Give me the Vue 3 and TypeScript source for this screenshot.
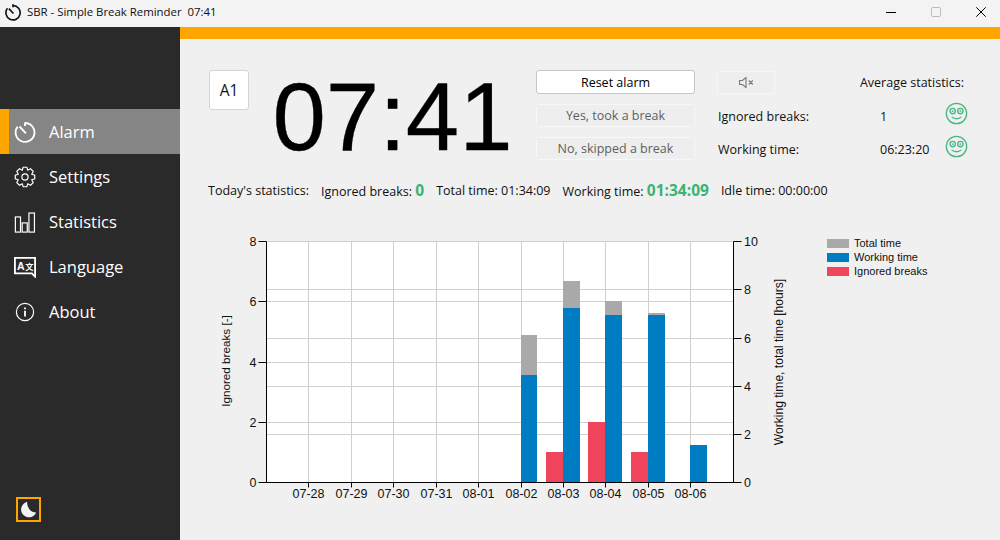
<template>
  <div class="window">
    <header class="titlebar">
      <svg class="app-icon" viewBox="0 0 24 24">
        <path d="M12 3.5a9.5 9.5 0 1 1-7.4 3.6" />
        <path d="M12 1.8v4M12.6 14 6.5 7.5" />
      </svg>
      <span class="app-title">SBR - Simple Break Reminder&nbsp; 07:41</span>
      <div class="win-controls">
        <svg viewBox="0 0 10 10"><path d="M0 5.5h10" stroke="#000" /></svg>
        <svg viewBox="0 0 10 10"><rect x=".5" y=".5" width="9" height="9" rx="1" stroke="#bbb" fill="none" /></svg>
        <svg viewBox="0 0 10 10"><path d="M.3.3l9.4 9.4M9.7.3.3 9.7" stroke="#000" /></svg>
      </div>
    </header>

    <div class="body">
      <aside class="sidebar">
        <nav class="nav">
          <div v-for="item in navItems" :key="item.label" class="nav-item" :class="{ active: item.active }">
            <svg class="nav-icon" viewBox="0 0 24 24">
              <template v-if="item.icon === 'alarm'">
                <path class="thick" d="M12 2.2a10.3 10.3 0 1 1-8 3.9" />
                <path class="thick" d="M12 1.5v4M13 13.5 6 6" />
              </template>
              <path v-else-if="item.icon === 'settings'" :d="gearPath" />
              <circle v-if="item.icon === 'settings'" cx="12" cy="12" r="3.4" />
              <template v-if="item.icon === 'stats'">
                <rect x="1.5" y="6.5" width="5.6" height="16.5" />
                <rect x="8.9" y="13" width="5.6" height="10" />
                <rect x="16.3" y="2.2" width="6" height="20.8" />
              </template>
              <template v-if="item.icon === 'lang'">
                <path class="thick" d="M1 2h22v20.5L19.5 19H1z" />
                <text x="3.2" y="15.5" class="icon-txt">A</text>
                <text x="12.2" y="15" class="icon-txt small">文</text>
              </template>
              <template v-if="item.icon === 'info'">
                <circle cx="12" cy="12" r="9.4" />
                <path class="thick" d="M12 10.5v6.5M12 7v2" />
              </template>
            </svg>
            <span>{{ item.label }}</span>
          </div>
        </nav>
        <button class="theme-btn">
          <svg viewBox="0 0 20 20" width="17" height="17">
            <path class="moon" d="M8.5 1A9.2 9.2 0 1 0 19 13.5 11 11 0 0 1 8.5 1z" />
          </svg>
        </button>
      </aside>

      <main class="main">
        <div class="accent"></div>
        <section class="top">
          <div class="alarm-id">A1</div>
          <div class="clock">07:41</div>
          <div class="actions">
            <button class="btn">Reset alarm</button>
            <button class="btn disabled">Yes, took a break</button>
            <button class="btn disabled">No, skipped a break</button>
          </div>
          <div class="avg">
            <div class="avg-head">
              <button class="btn disabled mute">
                <svg viewBox="0 0 15 11" width="15" height="11">
                  <path d="M.6 3.5h2.8L7 .6v9.8L3.4 7.5H.6zM9.8 3.5l4 4M13.8 3.5l-4 4" />
                </svg>
              </button>
              <span class="avg-title">Average statistics:</span>
            </div>
            <div v-for="row in avgRows" :key="row.label" class="avg-row">
              <span class="avg-label">{{ row.label }}</span>
              <span class="avg-value">{{ row.value }}</span>
              <svg class="smiley" viewBox="0 0 24 24">
                <circle cx="12" cy="12" r="10.6" />
                <circle cx="8" cy="9.5" r="2.8" />
                <circle cx="16" cy="9.5" r="2.8" />
                <circle class="pupil" cx="8" cy="9.5" r="1" />
                <circle class="pupil" cx="16" cy="9.5" r="1" />
                <path d="M7 15.5c2.5 2.6 7.5 2.6 10 0" />
              </svg>
            </div>
          </div>
        </section>

        <section class="today">
          <span>Today's statistics:</span>
          <span>Ignored breaks: <b>0</b></span>
          <span>Total time: 01:34:09</span>
          <span>Working time: <b>01:34:09</b></span>
          <span>Idle time: 00:00:00</span>
        </section>

        <section class="chart-row">
          <svg class="chart" viewBox="208 228 600 290" width="600" height="290">
            <rect :x="plot.left" :y="plot.top" :width="plot.right - plot.left" :height="plot.bottom - plot.top" fill="#fff" />
            <path v-for="x in gridX" :key="'gx' + x" class="grid" :d="`M${x} ${plot.top}V${plot.bottom}`" />
            <path v-for="y in gridY" :key="'gy' + y" class="grid" :d="`M${plot.left} ${y}H${plot.right}`" />

            <rect
              v-for="(bar, i) in bars"
              :key="i"
              :x="bar.x"
              :y="bar.top"
              :width="bar.w"
              :height="plot.bottom - bar.top"
              :fill="bar.color"
            />

            <path class="axis" :d="`M${plot.left} ${plot.top}V${plot.bottom}H${plot.right}V${plot.top}`" />

            <g v-for="t in leftTicks" :key="'l' + t.label">
              <path class="axis" :d="`M${plot.left - 8} ${t.y}H${plot.left}`" />
              <text class="tick" text-anchor="end" :x="plot.left - 10" :y="t.y + 4.5">{{ t.label }}</text>
            </g>
            <g v-for="t in rightTicks" :key="'r' + t.label">
              <path class="axis" :d="`M${plot.right} ${t.y}h8`" />
              <text class="tick" :x="plot.right + 10.5" :y="t.y + 4.5">{{ t.label }}</text>
            </g>
            <g v-for="(d, i) in days" :key="d">
              <path class="axis" :d="`M${gridX[i]} ${plot.bottom}v5`" />
              <text class="tick" text-anchor="middle" :x="gridX[i]" y="498">{{ d }}</text>
            </g>

            <text class="axis-title" text-anchor="middle" transform="translate(230 361) rotate(-90)">Ignored breaks [-]</text>
            <text class="axis-title wide" text-anchor="middle" transform="translate(783 362) rotate(-90)">Working time, total time [hours]</text>
          </svg>

          <ul class="legend">
            <li v-for="l in legend" :key="l.label">
              <i :style="{ background: l.color }"></i>{{ l.label }}
            </li>
          </ul>
        </section>
      </main>
    </div>
  </div>
</template>

<script setup lang="ts">
const navItems = [
  { label: "Alarm", icon: "alarm", active: true },
  { label: "Settings", icon: "settings" },
  { label: "Statistics", icon: "stats" },
  { label: "Language", icon: "lang" },
  { label: "About", icon: "info" },
];

const avgRows = [
  { label: "Ignored breaks:", value: "1" },
  { label: "Working time:", value: "06:23:20" },
];

const legend = [
  { label: "Total time", color: "#a9a9a9" },
  { label: "Working time", color: "#007cc3" },
  { label: "Ignored breaks", color: "#f0445c" },
];

// 8歯の歯車
function makeGear(teeth: number, outer: number, inner: number): string {
  const pts: string[] = [];
  const step = (Math.PI * 2) / teeth;
  for (let i = 0; i < teeth; i++) {
    const a = i * step - Math.PI / 2;
    const offs: [number, number][] = [
      [-0.5, inner],
      [-0.24, outer],
      [0.24, outer],
      [0.5, inner],
    ];
    for (const [o, r] of offs) {
      const ang = a + o * step;
      pts.push(`${(12 + r * Math.cos(ang)).toFixed(2)} ${(12 + r * Math.sin(ang)).toFixed(2)}`);
    }
  }
  return "M" + pts.join("L") + "Z";
}
const gearPath = makeGear(8, 10.8, 8);

const plot = { left: 266.5, right: 733.5, top: 241.5, bottom: 482.5 };
const gridX = [308.5, 351.5, 393.5, 436.5, 478.5, 521.5, 563.5, 605.5, 648.5, 690.5];
const gridY = [241.5, 289.5, 301.5, 338.5, 362.5, 386.5, 422.5, 434.5];
const days = ["07-28", "07-29", "07-30", "07-31", "08-01", "08-02", "08-03", "08-04", "08-05", "08-06"];

const leftTicks = [8, 6, 4, 2, 0].map((v) => ({ label: v, y: [482.5, 422.5, 362.5, 301.5, 241.5][v / 2] }));
const rightTicks = [10, 8, 6, 4, 2, 0].map((v) => ({ label: v, y: [482.5, 434.5, 386.5, 338.5, 289.5, 241.5][v / 2] }));

const gray = "#a9a9a9";
const blue = "#007cc3";
const red = "#f0445c";
const bars = [
  { x: 521, w: 16, top: 335, color: gray },
  { x: 521, w: 16, top: 375, color: blue },
  { x: 563, w: 17, top: 281, color: gray },
  { x: 563, w: 17, top: 308, color: blue },
  { x: 546, w: 17, top: 452, color: red },
  { x: 605, w: 17, top: 301, color: gray },
  { x: 605, w: 17, top: 315, color: blue },
  { x: 588, w: 17, top: 422, color: red },
  { x: 648, w: 17, top: 313, color: gray },
  { x: 648, w: 17, top: 315, color: blue },
  { x: 631, w: 17, top: 452, color: red },
  { x: 690, w: 17, top: 445, color: blue },
];
</script>

<style>
html,
body {
  margin: 0;
  background: #f0f0f0;
}
</style>

<style scoped>
.window {
  width: 1000px;
  height: 540px;
  display: flex;
  flex-direction: column;
  overflow: hidden;
  font-family: "Open Sans", "Noto Sans", sans-serif;
  font-size: 12.5px;
  color: #111;
  background: #f0f0f0;
}

.titlebar {
  height: 27px;
  flex: none;
  display: flex;
  align-items: center;
  padding: 0 14px 3px 4px;
  box-sizing: border-box;
  background: #f3f3f3;
}
.app-icon {
  width: 18px;
  height: 18px;
  margin-right: 5px;
  fill: none;
  stroke: #111;
  stroke-width: 2.2;
}
.app-title {
  font-size: 11.4px;
  margin-top: -1px;
}
.win-controls {
  margin-left: auto;
  display: flex;
  gap: 35px;
}
.win-controls svg {
  width: 10px;
  height: 10px;
  overflow: visible;
}

.body {
  flex: 1;
  display: flex;
  min-height: 0;
}

.sidebar {
  width: 180px;
  flex: none;
  display: flex;
  flex-direction: column;
  background: #2b2a2b;
  color: #fff;
  padding: 82px 0 18px;
  box-sizing: border-box;
}
.nav-item {
  height: 45px;
  display: flex;
  align-items: center;
  gap: 13px;
  padding-left: 14px;
  font-size: 16.5px;
  box-sizing: border-box;
}
.nav-item.active {
  background: #858585;
  border-left: 9px solid #ffa500;
  padding-left: 5px;
}
.nav-icon {
  width: 22px;
  height: 22px;
  fill: none;
  stroke: #fff;
  stroke-width: 1.3;
  flex: none;
}
.nav-icon .thick {
  stroke-width: 2;
}
.icon-txt {
  font-family: "Liberation Sans", sans-serif;
  font-size: 11.5px;
  font-weight: 700;
  fill: #fff;
  stroke: none;
}
.icon-txt.small {
  font-family: "Noto Sans CJK SC", sans-serif;
  font-size: 9px;
}
.theme-btn {
  margin: auto 0 0 16px;
  width: 25px;
  height: 25px;
  padding: 0;
  border: 2.5px solid #ffa500;
  background: none;
  display: flex;
  align-items: center;
  justify-content: center;
  box-sizing: border-box;
}
.moon {
  fill: #f4f4f4;
}

.main {
  flex: 1;
  display: flex;
  flex-direction: column;
  min-width: 0;
}
.accent {
  height: 12px;
  background: #ffa500;
  flex: none;
}

.top {
  display: flex;
  align-items: flex-start;
  padding: 31px 0 0 29px;
  height: 139px;
  box-sizing: border-box;
  flex: none;
}
.alarm-id {
  width: 40px;
  height: 40px;
  display: flex;
  align-items: center;
  justify-content: center;
  background: #fff;
  border: 1px solid #d4d4d4;
  border-radius: 3px;
  box-sizing: border-box;
  font-size: 15.5px;
}
.clock {
  width: 287px;
  margin-top: 3px;
  text-align: center;
  font-family: "Liberation Sans", Arial, sans-serif;
  font-size: 96px;
  line-height: 88px;
  color: #000;
  -webkit-text-stroke: 0.3px #000;
}
.actions {
  width: 159px;
  display: flex;
  flex-direction: column;
  gap: 10px;
}
.btn {
  height: 24px;
  padding: 0;
  font: inherit;
  color: #000;
  background: #fff;
  border: 1px solid #c6c6c6;
  border-radius: 3px;
  box-sizing: border-box;
}
.btn.disabled {
  height: 23px;
  background: #eeeeee;
  border-color: #f7f7f7;
  color: #5f5f5f;
}
.avg {
  margin-left: 23px;
  width: 250px;
  display: flex;
  flex-direction: column;
}
.avg-head {
  display: flex;
  align-items: center;
  justify-content: space-between;
  height: 22px;
  padding: 1px 4px 0 0;
  margin-bottom: 7px;
}
.mute {
  width: 58px;
  height: 22px;
  margin-left: -1px;
  display: flex;
  align-items: center;
  justify-content: center;
}
.mute svg {
  fill: none;
  stroke: #777;
  stroke-width: 1.1;
}
.avg-row {
  display: flex;
  align-items: center;
  height: 33px;
}
.avg-label {
  width: 162px;
}
.avg-value {
  width: 65px;
}
.smiley {
  width: 23px;
  height: 23px;
  margin-bottom: 6px;
  fill: none;
  stroke: #4ab884;
  stroke-width: 1.4;
}
.smiley .pupil {
  fill: #4ab884;
  stroke: none;
}

.today {
  display: flex;
  align-items: center;
  gap: 12px;
  padding-left: 28px;
  height: 24px;
  flex: none;
  white-space: nowrap;
}
.today b {
  font-size: 15.5px;
  color: #3cb371;
}

.chart-row {
  flex: 1;
  display: flex;
  align-items: flex-start;
  padding: 26px 0 0 28px;
  min-height: 0;
}
.chart {
  flex: none;
  display: block;
}
.grid {
  stroke: #d0d0d0;
  stroke-width: 1;
  fill: none;
}
.axis {
  stroke: #000;
  stroke-width: 1;
  fill: none;
}
.tick,
.axis-title {
  font-family: "Liberation Sans", Arial, sans-serif;
  font-size: 12.5px;
  fill: #111;
}
.axis-title {
  font-size: 11.7px;
}
.axis-title.wide {
  font-size: 12.1px;
}
.legend {
  list-style: none;
  margin: 8px 0 0 19px;
  padding: 0;
  font-family: "Liberation Sans", Arial, sans-serif;
  font-size: 11px;
}
.legend li {
  display: flex;
  align-items: center;
  height: 14px;
  white-space: nowrap;
}
.legend i {
  width: 22px;
  height: 9px;
  margin-right: 5px;
}
</style>
